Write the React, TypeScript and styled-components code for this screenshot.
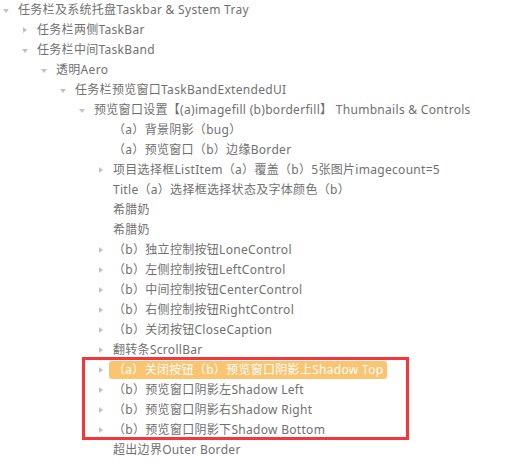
import React from "react";
import styled, { createGlobalStyle } from "styled-components";

const Global = createGlobalStyle`
  html, body { margin: 0; padding: 0; background: #ffffff; }
  body {
    font-family: "Noto Sans", "Noto Sans CJK SC", sans-serif;
    font-size: 12px;
    color: #707070;
  }
`;

type Arrow = "open" | "closed" | null;
interface Node { level: number; arrow: Arrow; text: string; selected?: boolean }

const nodes: Node[] = [
  { level: 0, arrow: "open", text: "任务栏及系统托盘Taskbar & System Tray" },
  { level: 1, arrow: "closed", text: "任务栏两侧TaskBar" },
  { level: 1, arrow: "open", text: "任务栏中间TaskBand" },
  { level: 2, arrow: "open", text: "透明Aero" },
  { level: 3, arrow: "open", text: "任务栏预览窗口TaskBandExtendedUI" },
  { level: 4, arrow: "open", text: "预览窗口设置【(a)imagefill (b)borderfill】 Thumbnails & Controls" },
  { level: 5, arrow: null, text: "（a）背景阴影（bug）" },
  { level: 5, arrow: null, text: "（a）预览窗口（b）边缘Border" },
  { level: 5, arrow: "closed", text: "项目选择框ListItem（a）覆盖（b）5张图片imagecount=5" },
  { level: 5, arrow: null, text: "Title（a）选择框选择状态及字体颜色（b）" },
  { level: 5, arrow: null, text: "希腊奶" },
  { level: 5, arrow: null, text: "希腊奶" },
  { level: 5, arrow: "closed", text: "（b）独立控制按钮LoneControl" },
  { level: 5, arrow: "closed", text: "（b）左侧控制按钮LeftControl" },
  { level: 5, arrow: "closed", text: "（b）中间控制按钮CenterControl" },
  { level: 5, arrow: "closed", text: "（b）右侧控制按钮RightControl" },
  { level: 5, arrow: "closed", text: "（b）关闭按钮CloseCaption" },
  { level: 5, arrow: "closed", text: "翻转条ScrollBar" },
  { level: 5, arrow: "closed", text: "（a）关闭按钮（b）预览窗口阴影上Shadow Top", selected: true },
  { level: 5, arrow: "closed", text: "（b）预览窗口阴影左Shadow Left" },
  { level: 5, arrow: "closed", text: "（b）预览窗口阴影右Shadow Right" },
  { level: 5, arrow: "closed", text: "（b）预览窗口阴影下Shadow Bottom" },
  { level: 5, arrow: null, text: "超出边界Outer Border" },
];

const Tree = styled.div`
  position: relative;
  display: flex;
  flex-direction: column;
  width: 523px;
  height: 463px;
  overflow: hidden;
`;

const Row = styled.div<{ $level: number }>`
  display: flex;
  align-items: center;
  height: 20px;
  padding-left: ${(p) => p.$level * 19}px;
  white-space: nowrap;
`;

const Toggle = styled.span`
  display: flex;
  align-items: center;
  justify-content: center;
  width: 11px;
  margin-right: 7px;
  height: 20px;
`;

const DownTri = styled.span`
  width: 0;
  height: 0;
  border-left: 3px solid transparent;
  border-right: 3px solid transparent;
  border-top: 4px solid #c2c2c2;
  margin-top: 1px;
`;

const RightTri = styled.span`
  width: 0;
  height: 0;
  border-top: 3px solid transparent;
  border-bottom: 3px solid transparent;
  border-left: 4px solid #c2c2c2;
`;

const Label = styled.span<{ $selected?: boolean }>`
  display: flex;
  align-items: center;
  height: 18px;
  line-height: 18px;
  padding: 0 4px;
  margin-left: -4px;
  border-radius: 3px;
  letter-spacing: 0.3px;
  background: ${(p) => (p.$selected ? "#fbc471" : "transparent")};
  color: ${(p) => (p.$selected ? "#ffffff" : "#707070")};
`;

const Annotation = styled.div`
  position: absolute;
  left: 82px;
  top: 357px;
  width: 327px;
  height: 83px;
  box-sizing: border-box;
  border: 3px solid #f5363b;
  pointer-events: none;
`;

export default function App() {
  return (
    <>
      <Global />
      <Tree>
        {nodes.map((n, i) => (
          <Row key={i} $level={n.level}>
            <Toggle>
              {n.arrow === "open" && <DownTri />}
              {n.arrow === "closed" && <RightTri />}
            </Toggle>
            <Label $selected={n.selected}>{n.text}</Label>
          </Row>
        ))}
        <Annotation />
      </Tree>
    </>
  );
}
